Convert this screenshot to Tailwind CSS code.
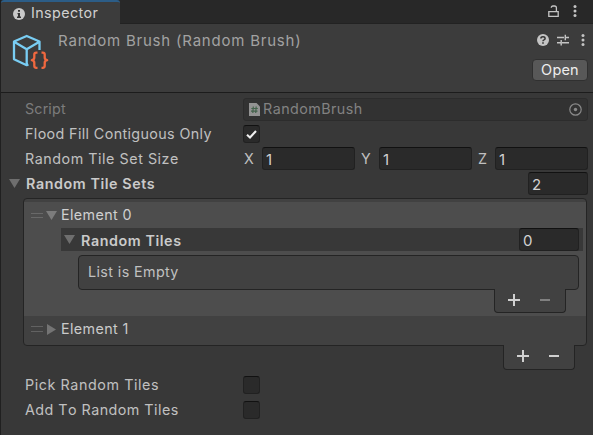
<!DOCTYPE html>
<html lang="en">
<head>
<meta charset="utf-8">
<title>Inspector</title>
<script src="https://cdn.jsdelivr.net/npm/@tailwindcss/browser@4"></script>
</head>
<body class="w-[593px] h-[435px] overflow-hidden bg-[#383838] font-['Inter',sans-serif] text-[14.300px] leading-[20px] text-[#c0c0c0] tracking-[0.4px] whitespace-nowrap [font-kerning:none]">
<div class="flex h-full flex-col border-l border-[#202020]">
  <div class="flex h-6 shrink-0 bg-[#282828]">
    <div class="flex w-[119px] items-center rounded-t-[3px] border-t-2 border-[#2c5d87] bg-[#3c3c3c] pl-3">
      <svg class="size-3 mt-[1px]" viewBox="0 0 12 12"><circle cx="6" cy="6" r="6" fill="#c8c8c8"/><path d="M4.500 5H7v3.500h1V10H4V8.500h1V6.300h-.5zM5 2h2v1.800H5z" fill="#333"/></svg>
      <span class="ml-[6px] tracking-[0.4px] text-[#d0d0d0]">Inspector</span>
    </div>
    <div class="flex flex-1 justify-end border-b border-[#222]">
      <svg class="mt-[5px] mr-[14px] h-3 w-[11px]" viewBox="0 0 11 12" fill="none" stroke="#c4c4c4" stroke-width="1.300"><path d="M.8 6.700h9.400v4.600H.8zM8.400 6.500V3Q8.400 1 6.500 1H5Q3.300 1 3.300 2.800"/></svg>
      <svg class="mt-[5px] mr-[16px] h-3 w-[4px]" viewBox="0 0 4 12" fill="#c4c4c4"><circle cx="2" cy="1.600" r="1.500"/><circle cx="2" cy="6" r="1.500"/><circle cx="2" cy="10.400" r="1.500"/></svg>
    </div>
  </div>
  <div class="flex h-[69px] shrink-0 border-b border-[#1c1c1c] bg-[#3c3c3c]">
    <svg class="ml-[11px] mt-[10px] h-[37px] w-[37px]" viewBox="0 0 37 37" fill="none" stroke-linejoin="round">
      <path d="M27.500 16V7.500L14.700 2 2 7.500v17.700l12.700 6 1.700-.8M2.500 8l12.200 7.200L27 8M14.700 15.200v15.500" stroke="#79cdf3" stroke-width="2.300"/>
      <path d="M25.500 18.600h-1.200q-2 0-2 2v3q0 2.300-2.500 2.600 2.500.3 2.500 2.600v3q0 2 2 2h1.200M29.500 18.600h1.200q2 0 2 2v3q0 2.300 2.500 2.600-2.500.3-2.500 2.600v3q0 2-2 2h-1.200" stroke="#f0683f" stroke-width="2.300"/>
    </svg>
    <div class="ml-[9px] mt-[7px] text-[15px] tracking-[0.78px] text-[#a2a2a2]">Random Brush (Random Brush)</div>
    <div class="ml-auto flex flex-col items-end">
      <div class="mt-[10px] flex h-3 items-center pr-[8px]">
        <svg class="size-3" viewBox="0 0 12 12"><circle cx="6" cy="6" r="6" fill="#c4c4c4"/><path d="M3.900 4.600Q3.900 2.700 6 2.700T8.100 4.400Q8.100 5.400 7 5.900 6 6.300 6 7.300" fill="none" stroke="#333" stroke-width="1.500"/><path d="M5.200 8.300h1.600v1.500H5.200z" fill="#333"/></svg>
        <svg class="ml-2 h-3 w-[12px]" viewBox="0 0 12 12" stroke="#c4c4c4" stroke-width="1.400"><path d="M0 3.500h7M8.500 3.500H12M8.300.7v5.600M0 8.800h3.500M5 8.800h7M4.200 6v5.600"/></svg>
        <svg class="ml-[12px] h-3 w-[4px]" viewBox="0 0 4 12" fill="#c4c4c4"><circle cx="2" cy="1.600" r="1.500"/><circle cx="2" cy="6" r="1.500"/><circle cx="2" cy="10.400" r="1.500"/></svg>
      </div>
      <button class="mt-[13px] mr-[5px] h-[22px] w-[56px] rounded-[4px] border border-[#303030] bg-[#585858] text-[14.500px] leading-[20px] tracking-[0.2px] text-[#eee]">Open</button>
    </div>
  </div>
  <div class="flex flex-col pr-[5px] pt-[3px]">
    <div class="flex h-[25px] items-center">
      <span class="w-[218px] ml-6 tracking-[0.2px] text-[#7c7c7c]">Script</span>
      <div class="mt-px flex h-[23px] flex-1 items-center rounded-[3px] border border-[#2c2c2c] bg-[#323232] pl-[5px] pr-[5px] text-[#828282]">
        <svg class="h-[13px] w-[11px]" viewBox="0 0 11 13"><path d="M0 0h7.500L11 3.500V13H0z" fill="#939393"/><path d="M4.300 3.500 3.800 10M7.200 3.500 6.700 10M2.300 5.500h6.500M2 8.200h6.500" stroke="#44634c" stroke-width="1.200"/></svg>
        <span class="ml-[3px] tracking-[0.45px]">RandomBrush</span>
        <svg class="ml-auto size-[13px]" viewBox="0 0 13 13"><circle cx="6.500" cy="6.500" r="5.700" fill="none" stroke="#8a8a8a" stroke-width="1.200"/><circle cx="6.500" cy="6.500" r="1.700" fill="#8a8a8a"/></svg>
      </div>
    </div>
    <div class="flex h-[25px] items-center">
      <span class="ml-6 w-[218px] tracking-[0.38px]">Flood Fill Contiguous Only</span>
      <span class="mt-px flex h-[18px] w-[17px] items-center justify-center rounded-[3px] border border-[#212121] border-t-[#111] bg-[#2a2a2a]"><svg class="h-[9px] w-[11px]" viewBox="0 0 11 9"><path d="M1 4.800 4 7.500 10 1" fill="none" stroke="#f0f0f0" stroke-width="2.100"/></svg></span>
    </div>
    <div class="flex h-[25px] items-center">
      <span class="ml-6 w-[218px] tracking-[0.54px]">Random Tile Set Size</span>
      <span class="w-[19px] pl-px">X</span><span class="h-[23px] w-[93px] rounded-[3px] border border-[#212121] border-t-[#111] bg-[#2a2a2a] pl-[3px] pt-[2px] text-[15px] text-[#d2d2d2]">1</span>
      <span class="ml-[6px] w-[18px]">Y</span><span class="h-[23px] w-[93px] rounded-[3px] border border-[#212121] border-t-[#111] bg-[#2a2a2a] pl-[3px] pt-[2px] text-[15px] text-[#d2d2d2]">1</span>
      <span class="ml-[6px] w-[17px]">Z</span><span class="h-[23px] flex-1 rounded-[3px] border border-[#212121] border-t-[#111] bg-[#2a2a2a] pl-[3px] pt-[2px] text-[15px] text-[#d2d2d2]">1</span>
    </div>
    <div class="flex h-[25px] items-center">
      <svg class="ml-[8px] mr-[6px] h-[9px] w-[11px]" viewBox="0 0 11 9"><path d="M0 0h11L5.500 9z" fill="#6e6e6e"/></svg>
      <span class="font-semibold tracking-[0.58px] text-[#cacaca]">Random Tile Sets</span>
      <span class="ml-auto h-[23px] w-[60px] rounded-[3px] border border-[#212121] border-t-[#111] bg-[#2a2a2a] pl-[3px] pt-[2px] text-[15px] text-[#d2d2d2]">2</span>
    </div>
  </div>
  <div class="ml-[22px] mt-[2px] mr-[6px] h-[148px] shrink-0 rounded-[4px] border border-[#242424] bg-[#414141] pt-[3px]">
    <div class="h-[114px] bg-[#4d4d4d]">
      <div class="flex h-[26px] items-center">
        <span class="ml-[7px] h-[5px] w-[12px] border-y border-[#696969]"></span>
        <svg class="ml-[3px] h-[9px] w-[11px]" viewBox="0 0 11 9"><path d="M0 0h11L5.500 9z" fill="#7c7c7c"/></svg>
        <span class="ml-[4px] text-[#d0d0d0]">Element 0</span>
      </div>
      <div class="ml-[37px] mr-[3px] flex h-[23px] items-center bg-[#383838]">
        <svg class="ml-[3px] mb-px h-[9px] w-[11px]" viewBox="0 0 11 9"><path d="M0 0h11L5.500 9z" fill="#6e6e6e"/></svg>
        <span class="ml-[6px] mt-[2px] font-semibold tracking-[0.58px] text-[#cacaca]">Random Tiles</span>
        <span class="ml-auto mr-[4px] h-[23px] w-[60px] rounded-[3px] border border-[#212121] border-t-[#111] bg-[#2a2a2a] pl-[3px] pt-[2px] text-[15px] text-[#d2d2d2]">0</span>
      </div>
      <div class="ml-[54px] mr-[7px] mt-[4px] h-[35px] rounded-[4px] border border-[#242424] bg-[#414141] pl-[9px] pt-[6px]">List is Empty</div>
      <div class="relative -mt-px ml-auto mr-[20px] flex h-[24px] w-[72px] items-center rounded-b-[4px] border border-t-0 border-[#242424] bg-[#414141]">
        <svg class="mb-px ml-[13px] size-3" viewBox="0 0 12 12"><path d="M0 6h12M6 0v12" stroke="#d0d0d0" stroke-width="2"/></svg>
        <svg class="mb-px ml-[20px] h-[2px] w-[10px]" viewBox="0 0 10 2"><path d="M0 0h10v2H0z" fill="#808080"/></svg>
      </div>
    </div>
    <div class="flex h-[26px] items-center">
      <span class="ml-[7px] h-[6px] w-[12px] border-y border-[#626262]"></span>
      <svg class="ml-[4px] h-[11px] w-[9px]" viewBox="0 0 9 11"><path d="M0 0v11l9-5.500z" fill="#747474"/></svg>
      <span class="ml-[5px] text-[#cacaca]">Element 1</span>
    </div>
  </div>
  <div class="relative -mt-px ml-auto mr-[18px] flex h-[25px] w-[72px] shrink-0 items-center rounded-b-[4px] border border-t-0 border-[#242424] bg-[#414141]">
    <svg class="mb-[2px] ml-[13px] size-3" viewBox="0 0 12 12"><path d="M0 6h12M6 0v12" stroke="#d0d0d0" stroke-width="2"/></svg>
    <svg class="mb-[2px] ml-[20px] h-[2px] w-[10px]" viewBox="0 0 10 2"><path d="M0 0h10v2H0z" fill="#d0d0d0"/></svg>
  </div>
  <div class="mt-[2px] flex h-[25px] shrink-0 items-center">
    <span class="ml-6 w-[218px] tracking-[0.58px]">Pick Random Tiles</span>
    <span class="h-[18px] w-[17px] rounded-[3px] border border-[#212121] border-t-[#111] bg-[#2a2a2a]"></span>
  </div>
  <div class="flex h-[25px] shrink-0 items-center">
    <span class="ml-6 w-[218px] tracking-[0.47px]">Add To Random Tiles</span>
    <span class="h-[18px] w-[17px] rounded-[3px] border border-[#212121] border-t-[#111] bg-[#2a2a2a]"></span>
  </div>
</div>
</body>
</html>
